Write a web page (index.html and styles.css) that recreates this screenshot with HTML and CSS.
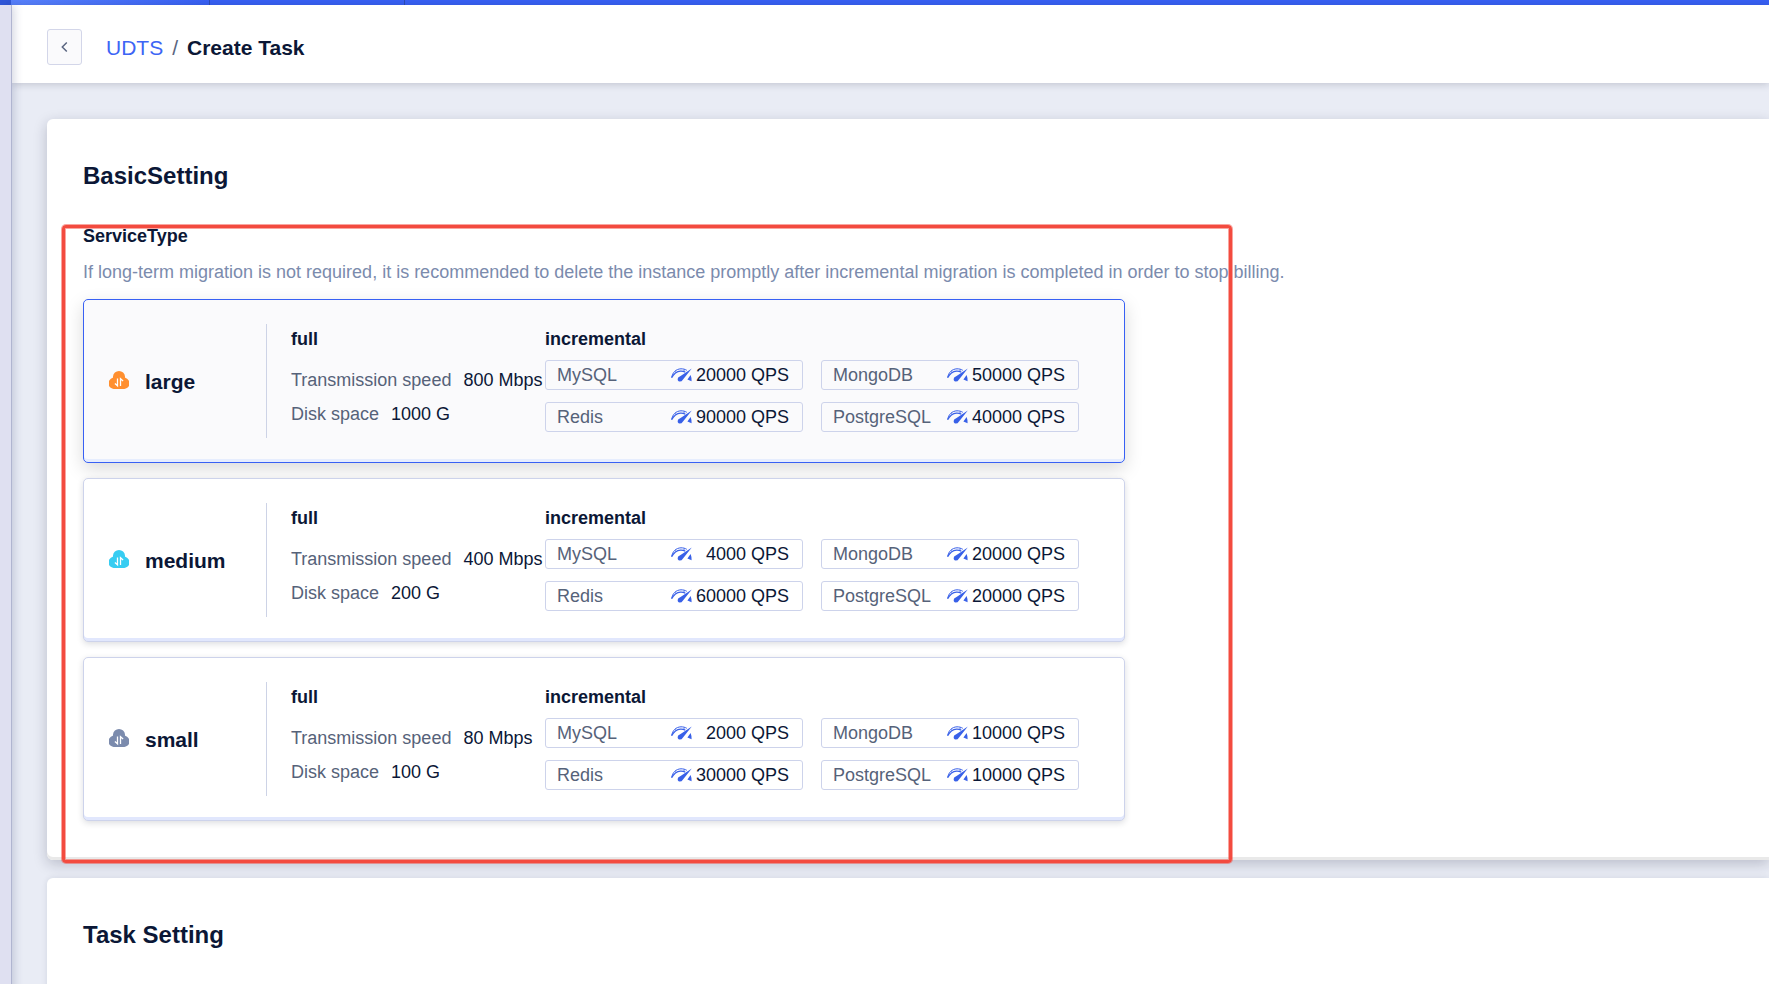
FILE: index.html
```html
<!DOCTYPE html>
<html lang="en">
<head>
<meta charset="utf-8">
<title>Create Task</title>
<link rel="stylesheet" href="styles.css">
</head>
<body>
<svg class="sprite" aria-hidden="true">
  <symbol id="cloud" viewBox="0 0 20 18">
    <path fill="currentColor" d="M10 0a6 6 0 0 1 6 5.600Q15.900 6.300 16.200 6.800A5.700 5.700 0 0 1 14.300 18H5.700A5.700 5.700 0 0 1 3.800 6.800Q4.100 6.300 4 5.600A6 6 0 0 1 10 0z"/>
    <path fill="none" stroke="#fff" stroke-width="1.300" d="M8.500 7.500v7.300L5.900 12.400M11.500 15V7.800l2.600 2.300"/>
  </symbol>
  <symbol id="gauge" viewBox="0 0 21 14">
    <path fill="none" stroke="#3860e8" stroke-width="1" d="M.7 9.800C1.300 4.500 5 1 10 .8c2.300 0 4.200.5 5.800 1.500"/>
    <path fill="none" stroke="#3860e8" stroke-width="1.200" d="M.8 9.600C2.800 5.600 5.800 3.400 9.500 3.100c2-.1 3.400.3 4.800 1"/>
    <path fill="none" stroke="#3860e8" stroke-width=".8" d="M4.200 3.300l1 1.400M13.400 1.300l-.6 2"/>
    <path fill="#3860e8" d="M20.800.6L12 11.400Q10.800 13.600 8.600 13.600 6.200 13.200 6.800 10.600 7 9.300 8.800 8.600zM19.600 7q1.100 2.600 1 6.200l-4.200-1.700z"/>
  </symbol>
</svg>
<div class="topbar"><span class="topbar-logo"></span><span class="topbar-brand"></span><span class="topbar-region"></span></div>
<div class="shell">
  <aside class="rail"></aside>
  <main class="main">
    <header class="header">
      <button class="back" type="button" aria-label="Back">
        <svg width="8" height="12" viewBox="0 0 8 12"><path d="M5.800 1.500L1.300 6l4.500 4.500" fill="none" stroke="#5a6580" stroke-width="1.500"/></svg>
      </button>
      <nav class="crumbs"><a href="#">UDTS</a><span class="slash">/</span><h1>Create Task</h1></nav>
    </header>
    <div class="content">
      <section class="panel">
        <h2>BasicSetting</h2>
        <h3>ServiceType</h3>
        <p class="hint">If long-term migration is not required, it is recommended to delete the instance promptly after incremental migration is completed in order to stop billing.</p>
        <div class="plans">
          <label class="plan">
            <input type="radio" name="service" value="large" checked>
            <span class="name"><svg class="cloud orange"><use href="#cloud"/></svg>large</span>
            <span class="full"><b>full</b>
              <span class="spec first">Transmission speed<em>800 Mbps</em></span>
              <span class="spec">Disk space<em>1000 G</em></span></span>
            <span class="incremental"><b>incremental</b>
              <span class="chips">
                <span class="chip">MySQL<svg class="gauge"><use href="#gauge"/></svg><em>20000 QPS</em></span>
                <span class="chip">MongoDB<svg class="gauge"><use href="#gauge"/></svg><em>50000 QPS</em></span>
                <span class="chip">Redis<svg class="gauge"><use href="#gauge"/></svg><em>90000 QPS</em></span>
                <span class="chip">PostgreSQL<svg class="gauge"><use href="#gauge"/></svg><em>40000 QPS</em></span>
              </span></span>
          </label>
          <label class="plan">
            <input type="radio" name="service" value="medium">
            <span class="name"><svg class="cloud cyan"><use href="#cloud"/></svg>medium</span>
            <span class="full"><b>full</b>
              <span class="spec first">Transmission speed<em>400 Mbps</em></span>
              <span class="spec">Disk space<em>200 G</em></span></span>
            <span class="incremental"><b>incremental</b>
              <span class="chips">
                <span class="chip">MySQL<svg class="gauge"><use href="#gauge"/></svg><em>4000 QPS</em></span>
                <span class="chip">MongoDB<svg class="gauge"><use href="#gauge"/></svg><em>20000 QPS</em></span>
                <span class="chip">Redis<svg class="gauge"><use href="#gauge"/></svg><em>60000 QPS</em></span>
                <span class="chip">PostgreSQL<svg class="gauge"><use href="#gauge"/></svg><em>20000 QPS</em></span>
              </span></span>
          </label>
          <label class="plan">
            <input type="radio" name="service" value="small">
            <span class="name"><svg class="cloud slate"><use href="#cloud"/></svg>small</span>
            <span class="full"><b>full</b>
              <span class="spec first">Transmission speed<em>80 Mbps</em></span>
              <span class="spec">Disk space<em>100 G</em></span></span>
            <span class="incremental"><b>incremental</b>
              <span class="chips">
                <span class="chip">MySQL<svg class="gauge"><use href="#gauge"/></svg><em>2000 QPS</em></span>
                <span class="chip">MongoDB<svg class="gauge"><use href="#gauge"/></svg><em>10000 QPS</em></span>
                <span class="chip">Redis<svg class="gauge"><use href="#gauge"/></svg><em>30000 QPS</em></span>
                <span class="chip">PostgreSQL<svg class="gauge"><use href="#gauge"/></svg><em>10000 QPS</em></span>
              </span></span>
          </label>
        </div>
        <div class="marker"></div>
      </section>
      <section class="panel">
        <h2>Task Setting</h2>
      </section>
    </div>
  </main>
</div>
</body>
</html>
```
FILE: styles.css
```css
* { box-sizing: border-box; }
body {
  margin: 0;
  min-height: 100vh;
  display: flex;
  flex-direction: column;
  font: 18px/27px "Liberation Sans", Arial, sans-serif;
  color: #0b1736;
  background: #e9ecf5;
}
h1, h2, h3, p { margin: 0; }
em { font-style: normal; }
.sprite { display: none; }

.topbar { display: flex; height: 5px; background: #3860f4; }
.topbar-logo { width: 11px; background: #3158da; }
.topbar-brand { width: 199px; border-right: 1px solid #2c4cb8; background: linear-gradient(90deg, #5982fd, #3860f4); }
.topbar-region { width: 195px; border-right: 1px solid #2c4cb8; }

.shell { flex: 1; display: flex; }
.rail {
  width: 12px;
  flex: none;
  position: relative;
  z-index: 2;
  background: #dfe0f1;
  border-right: 1px solid #b0b5d0;
  box-shadow: 2px 0 10px rgba(30, 45, 100, .2);
}
.main { flex: 1; min-width: 0; display: flex; flex-direction: column; }

.header {
  position: relative;
  z-index: 1;
  display: flex;
  align-items: center;
  gap: 24px;
  padding: 24px 35px 18px;
  background: #fff;
  box-shadow: 0 1px 8px rgba(20, 25, 50, .2);
}
.back {
  width: 35px;
  height: 36px;
  padding: 0;
  display: flex;
  align-items: center;
  justify-content: center;
  border: 1px solid #d3d6e9;
  border-radius: 3px;
  background: #fafafc;
}
.crumbs { display: flex; gap: 9px; font-size: 21px; }
.crumbs a { color: #3d65f5; text-decoration: none; }
.crumbs h1 { font-size: 21px; }
.slash { color: #5a6580; }

.content {
  flex: 1;
  display: flex;
  flex-direction: column;
  gap: 18px;
  padding: 36px 0 0 35px;
}
.panel {
  position: relative;
  padding: 36px 36px 39px;
  border-radius: 6px 0 0 6px;
  background: #fff;
  box-shadow: inset 0 -3px #e9e9e9, 0 4px 14px rgba(20, 25, 50, .22);
}
.panel:last-child { flex: 1; border-radius: 6px 0 0 0; box-shadow: 0 0 6px rgba(20, 25, 50, .1); }
h2 { font-size: 24px; line-height: 42px; }
h3 { font-size: 18px; margin-top: 26px; }
.hint { margin: 9px 0 13px; color: #7b8bad; }

.plans { display: flex; flex-direction: column; gap: 15px; max-width: 1042px; }
.plan {
  position: relative;
  display: flex;
  padding: 24px;
  border: 1px solid #cdd3eb;
  border-radius: 5px;
  background: #fff;
  box-shadow: inset 0 -3px #e1e7fd, 0 2px 6px rgba(20, 25, 50, .15);
}
.plan:has(:checked) {
  border-color: #3860f4;
  background: #fafafc;
  box-shadow: inset 0 -3px #e6edfe, 0 6px 18px rgba(0, 0, 0, .15);
}
.plan input { position: absolute; opacity: 0; margin: 0; }
.name {
  width: 159px;
  flex: none;
  display: flex;
  align-items: center;
  gap: 16px;
  padding-left: 1px;
  border-right: 1px solid #cdd3e6;
  font-size: 21px;
  font-weight: bold;
}
.cloud { width: 20px; height: 18px; margin-bottom: 2px; }
.orange { color: #ff8f2f; }
.cyan { color: #37cdf2; }
.slate { color: #7b8bad; }
.full { width: 278px; flex: none; padding-left: 24px; white-space: nowrap; }
.plan b { display: block; line-height: 30px; }
.spec { display: flex; gap: 12px; line-height: 34px; color: #566279; }
.first { margin-top: 9px; }
.spec em, .chip em { color: #0b1736; }
.chips { display: grid; grid-template-columns: 258px 258px; gap: 12px 18px; margin: 6px 0; }
.chip {
  display: flex;
  align-items: center;
  height: 30px;
  padding: 0 13px 0 11px;
  border: 1px solid #cdd3eb;
  border-radius: 3px;
  color: #566279;
}
.chip em { width: 97px; text-align: right; }
.gauge { width: 21px; height: 14px; margin-left: auto; }

.marker {
  position: absolute;
  top: 106px;
  left: 15px;
  width: 1170px;
  bottom: -3px;
  border: 3px solid #f34b3f;
  border-radius: 4px;
  box-shadow: 0 0 0 1px rgba(243, 75, 63, .5), inset 0 0 0 1px rgba(243, 75, 63, .5);
  pointer-events: none;
}
```
